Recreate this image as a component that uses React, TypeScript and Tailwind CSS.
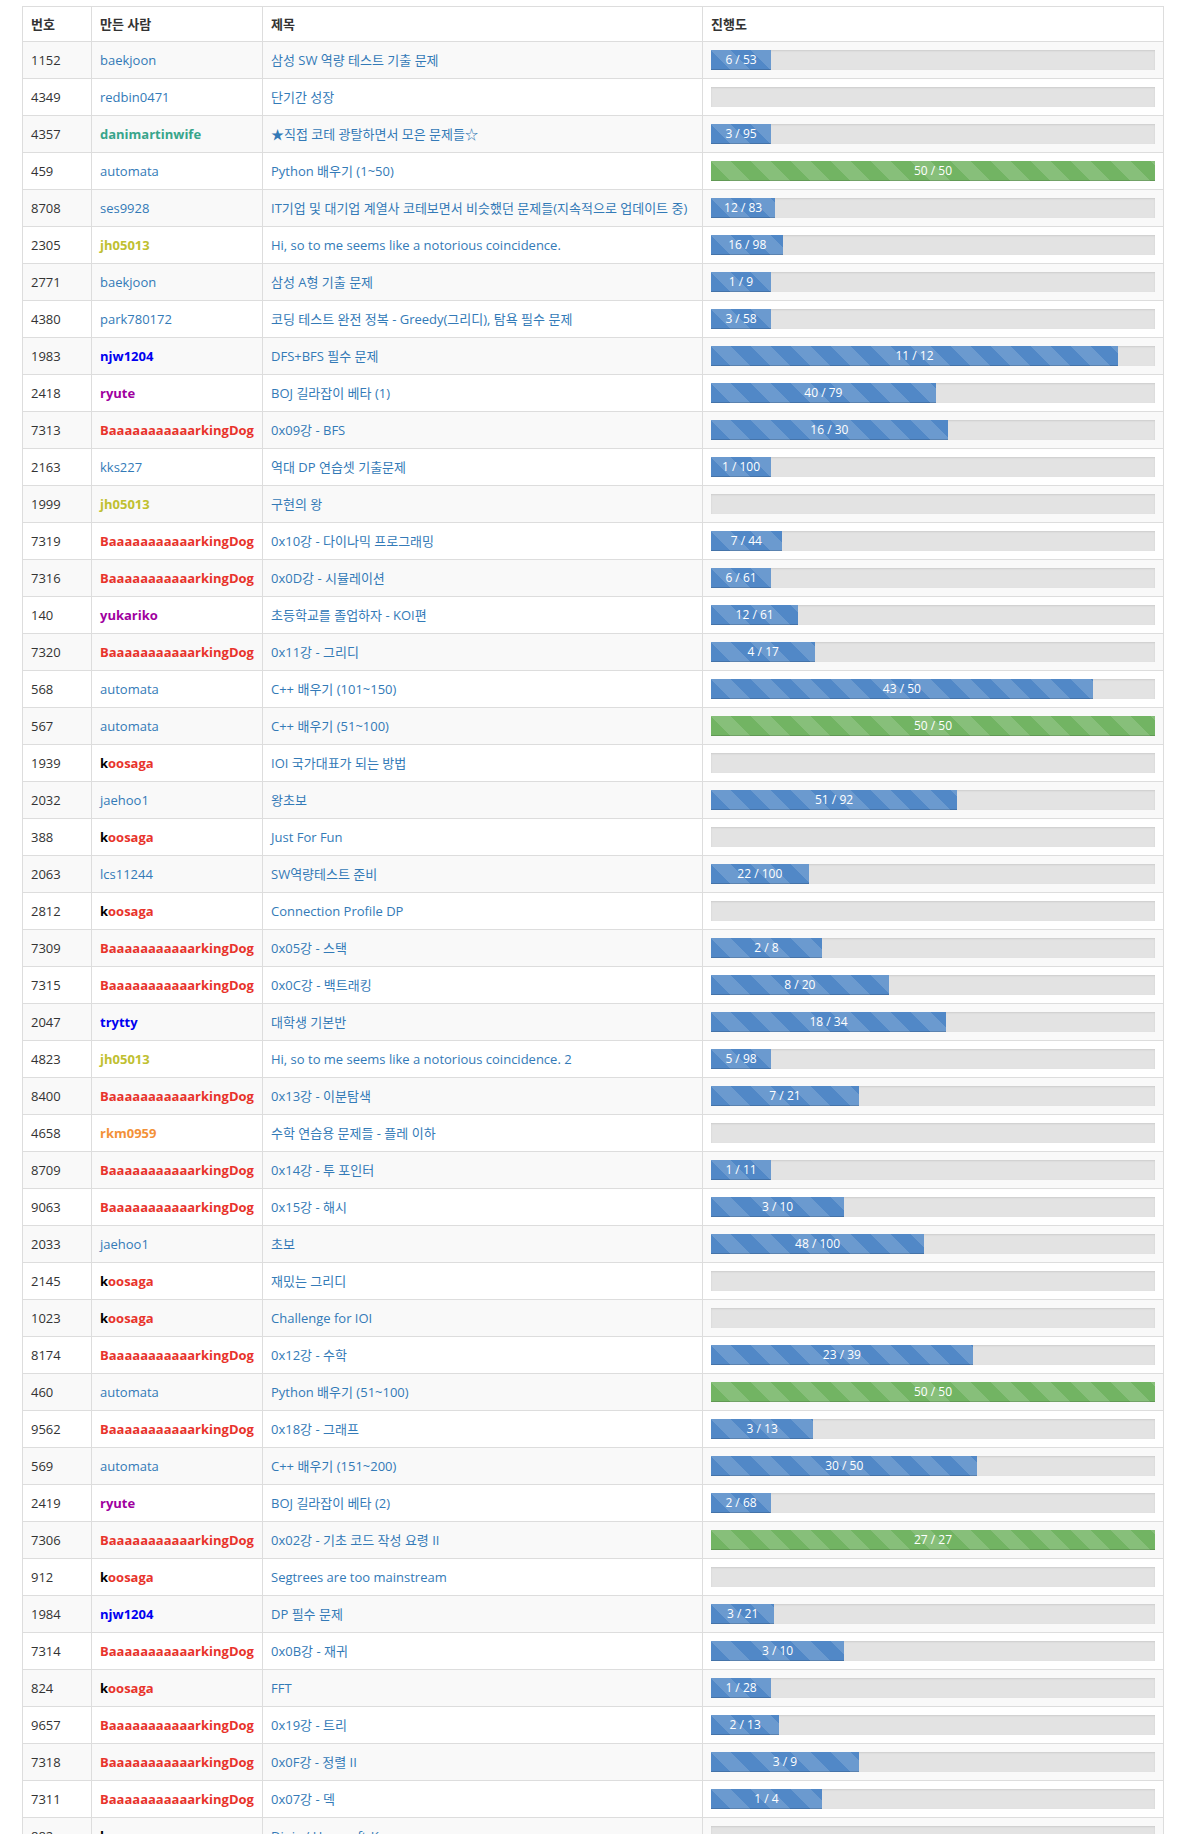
import React from "react"

type Color = "link" | "red" | "orange" | "yellow" | "blue" | "purple" | "teal" | "koo"

type Workbook = {
  id: number
  user: string
  color: Color
  title: string
  solved: number
  total: number
}

const workbooks: Workbook[] = [
  { id: 1152, user: "baekjoon", color: "link", title: "삼성 SW 역량 테스트 기출 문제", solved: 6, total: 53 },
  { id: 4349, user: "redbin0471", color: "link", title: "단기간 성장", solved: 0, total: 1 },
  { id: 4357, user: "danimartinwife", color: "teal", title: "★직접 코테 광탈하면서 모은 문제들☆", solved: 3, total: 95 },
  { id: 459, user: "automata", color: "link", title: "Python 배우기 (1~50)", solved: 50, total: 50 },
  { id: 8708, user: "ses9928", color: "link", title: "IT기업 및 대기업 계열사 코테보면서 비슷했던 문제들(지속적으로 업데이트 중)", solved: 12, total: 83 },
  { id: 2305, user: "jh05013", color: "yellow", title: "Hi, so to me seems like a notorious coincidence.", solved: 16, total: 98 },
  { id: 2771, user: "baekjoon", color: "link", title: "삼성 A형 기출 문제", solved: 1, total: 9 },
  { id: 4380, user: "park780172", color: "link", title: "코딩 테스트 완전 정복 - Greedy(그리디), 탐욕 필수 문제", solved: 3, total: 58 },
  { id: 1983, user: "njw1204", color: "blue", title: "DFS+BFS 필수 문제", solved: 11, total: 12 },
  { id: 2418, user: "ryute", color: "purple", title: "BOJ 길라잡이 베타 (1)", solved: 40, total: 79 },
  { id: 7313, user: "BaaaaaaaaaaarkingDog", color: "red", title: "0x09강 - BFS", solved: 16, total: 30 },
  { id: 2163, user: "kks227", color: "link", title: "역대 DP 연습셋 기출문제", solved: 1, total: 100 },
  { id: 1999, user: "jh05013", color: "yellow", title: "구현의 왕", solved: 0, total: 1 },
  { id: 7319, user: "BaaaaaaaaaaarkingDog", color: "red", title: "0x10강 - 다이나믹 프로그래밍", solved: 7, total: 44 },
  { id: 7316, user: "BaaaaaaaaaaarkingDog", color: "red", title: "0x0D강 - 시뮬레이션", solved: 6, total: 61 },
  { id: 140, user: "yukariko", color: "purple", title: "초등학교를 졸업하자 - KOI편", solved: 12, total: 61 },
  { id: 7320, user: "BaaaaaaaaaaarkingDog", color: "red", title: "0x11강 - 그리디", solved: 4, total: 17 },
  { id: 568, user: "automata", color: "link", title: "C++ 배우기 (101~150)", solved: 43, total: 50 },
  { id: 567, user: "automata", color: "link", title: "C++ 배우기 (51~100)", solved: 50, total: 50 },
  { id: 1939, user: "koosaga", color: "koo", title: "IOI 국가대표가 되는 방법", solved: 0, total: 1 },
  { id: 2032, user: "jaehoo1", color: "link", title: "왕초보", solved: 51, total: 92 },
  { id: 388, user: "koosaga", color: "koo", title: "Just For Fun", solved: 0, total: 1 },
  { id: 2063, user: "lcs11244", color: "link", title: "SW역량테스트 준비", solved: 22, total: 100 },
  { id: 2812, user: "koosaga", color: "koo", title: "Connection Profile DP", solved: 0, total: 1 },
  { id: 7309, user: "BaaaaaaaaaaarkingDog", color: "red", title: "0x05강 - 스택", solved: 2, total: 8 },
  { id: 7315, user: "BaaaaaaaaaaarkingDog", color: "red", title: "0x0C강 - 백트래킹", solved: 8, total: 20 },
  { id: 2047, user: "trytty", color: "blue", title: "대학생 기본반", solved: 18, total: 34 },
  { id: 4823, user: "jh05013", color: "yellow", title: "Hi, so to me seems like a notorious coincidence. 2", solved: 5, total: 98 },
  { id: 8400, user: "BaaaaaaaaaaarkingDog", color: "red", title: "0x13강 - 이분탐색", solved: 7, total: 21 },
  { id: 4658, user: "rkm0959", color: "orange", title: "수학 연습용 문제들 - 플레 이하", solved: 0, total: 1 },
  { id: 8709, user: "BaaaaaaaaaaarkingDog", color: "red", title: "0x14강 - 투 포인터", solved: 1, total: 11 },
  { id: 9063, user: "BaaaaaaaaaaarkingDog", color: "red", title: "0x15강 - 해시", solved: 3, total: 10 },
  { id: 2033, user: "jaehoo1", color: "link", title: "초보", solved: 48, total: 100 },
  { id: 2145, user: "koosaga", color: "koo", title: "재밌는 그리디", solved: 0, total: 1 },
  { id: 1023, user: "koosaga", color: "koo", title: "Challenge for IOI", solved: 0, total: 1 },
  { id: 8174, user: "BaaaaaaaaaaarkingDog", color: "red", title: "0x12강 - 수학", solved: 23, total: 39 },
  { id: 460, user: "automata", color: "link", title: "Python 배우기 (51~100)", solved: 50, total: 50 },
  { id: 9562, user: "BaaaaaaaaaaarkingDog", color: "red", title: "0x18강 - 그래프", solved: 3, total: 13 },
  { id: 569, user: "automata", color: "link", title: "C++ 배우기 (151~200)", solved: 30, total: 50 },
  { id: 2419, user: "ryute", color: "purple", title: "BOJ 길라잡이 베타 (2)", solved: 2, total: 68 },
  { id: 7306, user: "BaaaaaaaaaaarkingDog", color: "red", title: "0x02강 - 기초 코드 작성 요령 II", solved: 27, total: 27 },
  { id: 912, user: "koosaga", color: "koo", title: "Segtrees are too mainstream", solved: 0, total: 1 },
  { id: 1984, user: "njw1204", color: "blue", title: "DP 필수 문제", solved: 3, total: 21 },
  { id: 7314, user: "BaaaaaaaaaaarkingDog", color: "red", title: "0x0B강 - 재귀", solved: 3, total: 10 },
  { id: 824, user: "koosaga", color: "koo", title: "FFT", solved: 1, total: 28 },
  { id: 9657, user: "BaaaaaaaaaaarkingDog", color: "red", title: "0x19강 - 트리", solved: 2, total: 13 },
  { id: 7318, user: "BaaaaaaaaaaarkingDog", color: "red", title: "0x0F강 - 정렬 II", solved: 3, total: 9 },
  { id: 7311, user: "BaaaaaaaaaaarkingDog", color: "red", title: "0x07강 - 덱", solved: 1, total: 4 },
  { id: 882, user: "koosaga", color: "koo", title: "Dinic / Hopcroft-Karp", solved: 0, total: 1 },
]

const userClass: Record<Color, string> = {
  link: "text-[#337ab7]",
  red: "font-bold text-[#e8332b]",
  orange: "font-bold text-[#f39138]",
  yellow: "font-bold text-[#c0c030]",
  blue: "font-bold text-[#0000f0]",
  purple: "font-bold text-[#a000a0]",
  teal: "font-bold text-[#38a58b]",
  koo: "font-bold text-[#e8332b]",
}

const stripes =
  "bg-[linear-gradient(45deg,rgba(255,255,255,0.15)_25%,transparent_25%,transparent_50%,rgba(255,255,255,0.15)_50%,rgba(255,255,255,0.15)_75%,transparent_75%,transparent)] bg-size-[40px_40px]"

function UserName({ name, color }: { name: string; color: Color }) {
  if (color === "koo") {
    return (
      <a className="font-bold">
        <span className="text-black">{name[0]}</span>
        <span className="text-[#e8332b]">{name.slice(1)}</span>
      </a>
    )
  }
  return <a className={userClass[color]}>{name}</a>
}

function Progress({ solved, total }: { solved: number; total: number }) {
  const done = solved === total
  const pct = (solved / total) * 100
  return (
    <div className="h-5 w-full overflow-hidden bg-[#e3e3e3] shadow-[inset_0_1px_2px_rgba(0,0,0,0.1)]">
      {solved > 0 && (
        <div
          className={`h-5 min-w-[60px] text-center text-xs leading-5 text-white shadow-[inset_0_-1px_0_rgba(0,0,0,0.15)] ${stripes} ${
            done ? "bg-[#72b463]" : "bg-[#5188c7]"
          }`}
          style={{ width: `${pct}%` }}
        >
          {solved} / {total}
        </div>
      )}
    </div>
  )
}

export default function App() {
  return (
    <div className="min-h-screen bg-white px-[22px] pt-[6px] font-['Open_Sans','Noto_Sans_CJK_KR',sans-serif] text-[13px] text-[#333]">
      <table className="w-[1142px] table-fixed border-collapse border border-[#ddd]">
        <thead>
          <tr>
            <th className="w-[69px] border border-[#ddd] px-2 py-[7px] text-left font-bold leading-5">번호</th>
            <th className="w-[171px] border border-[#ddd] px-2 py-[7px] text-left font-bold leading-5">만든 사람</th>
            <th className="w-[440px] border border-[#ddd] px-2 py-[7px] text-left font-bold leading-5">제목</th>
            <th className="border border-[#ddd] px-2 py-[7px] text-left font-bold leading-5">진행도</th>
          </tr>
        </thead>
        <tbody>
          {workbooks.map((w, i) => (
            <tr key={w.id} className={i % 2 === 0 ? "bg-[#f9f9f9]" : "bg-white"}>
              <td className="border border-[#ddd] p-2 leading-5">{w.id}</td>
              <td className="whitespace-nowrap border border-[#ddd] p-2 leading-5">
                <UserName name={w.user} color={w.color} />
              </td>
              <td className="whitespace-nowrap border border-[#ddd] p-2 leading-5">
                <a className="text-[#337ab7]">{w.title}</a>
              </td>
              <td className="border border-[#ddd] p-2 leading-5">
                <Progress solved={w.solved} total={w.total} />
              </td>
            </tr>
          ))}
        </tbody>
      </table>
    </div>
  )
}
